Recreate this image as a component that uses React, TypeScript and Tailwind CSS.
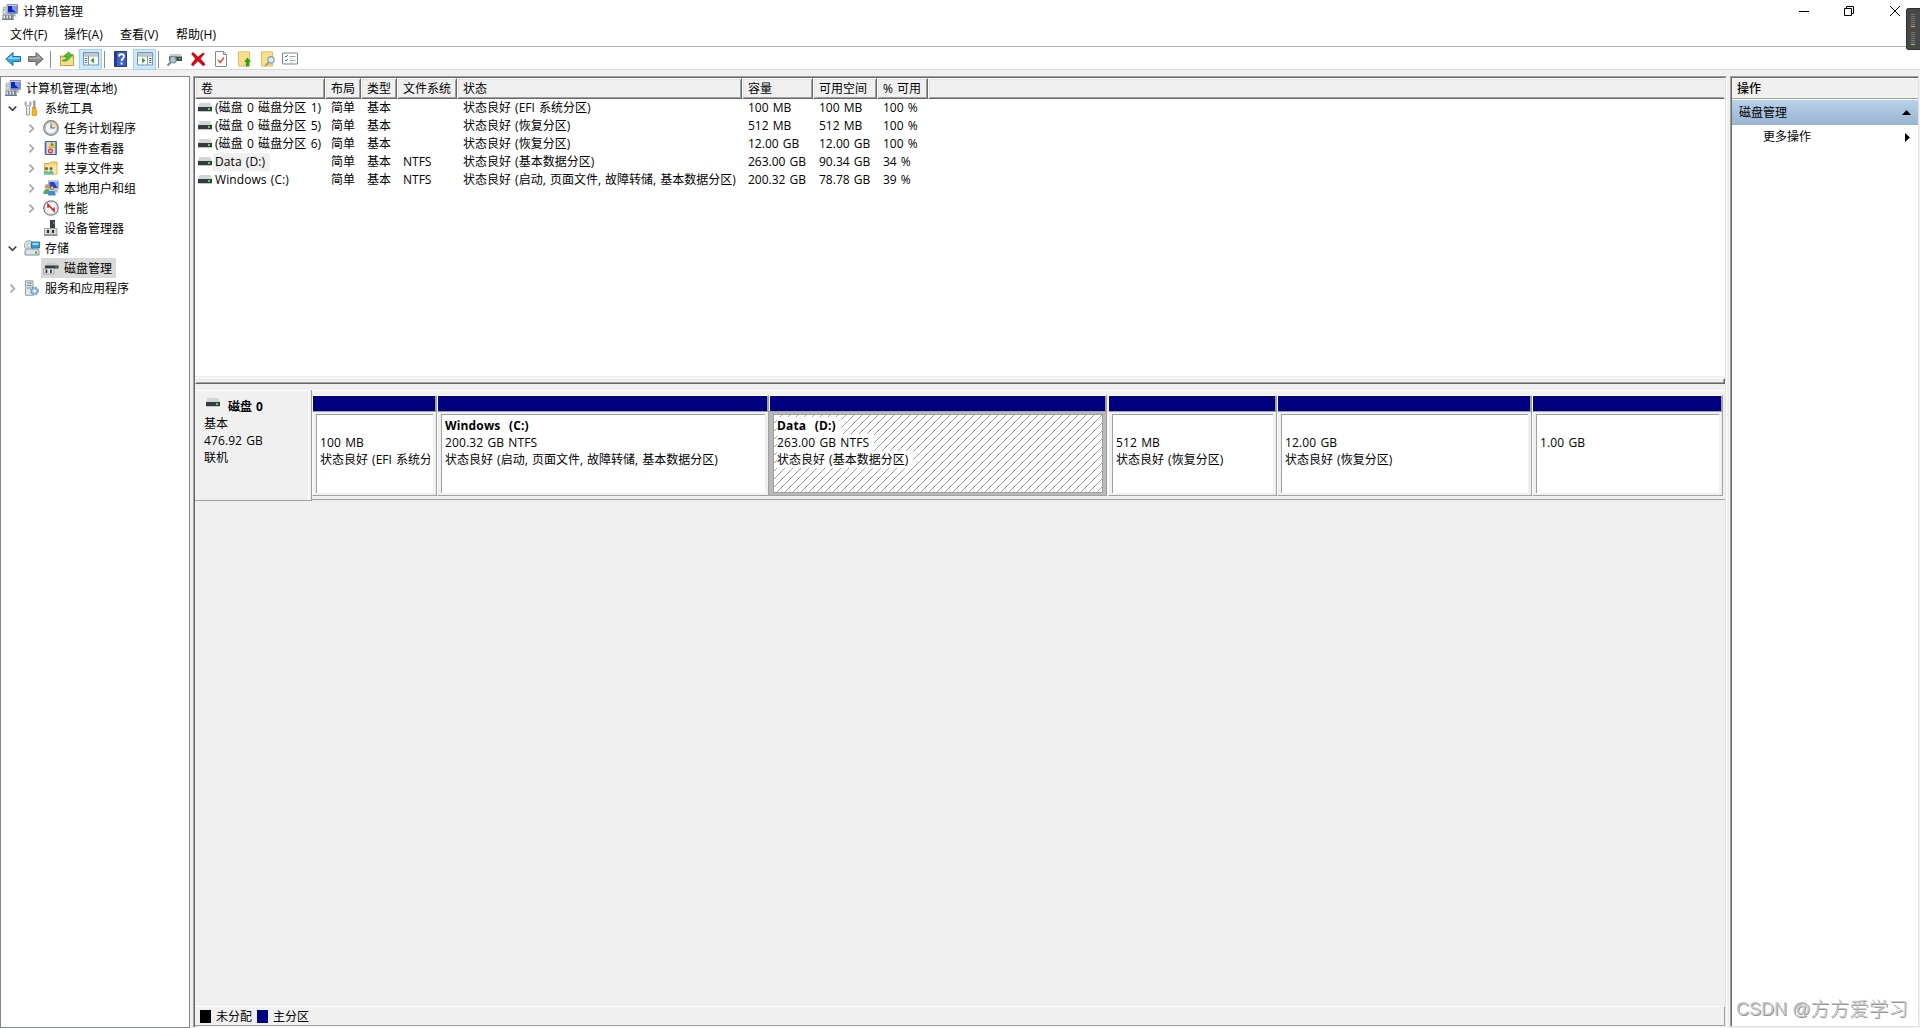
import type { ReactNode } from 'react'
import clsx from 'clsx'

function Svg({ children, w = 16, h = 16 }: { children: ReactNode; w?: number; h?: number }) {
  return (
    <svg className="block shrink-0" width={w} height={h} viewBox={`0 0 ${w} ${h}`} fill="none">
      {children}
    </svg>
  )
}

function ComputerIcon() {
  return (
    <Svg>
      <path d="M5 .5h10.5v9H5z" fill="#c9cdd6" stroke="#8d94a3" />
      <path d="M6 2h8.5v6.5H6z" fill="#1226c4" />
      <path d="M10 2h4.500v6.500L10 5z" fill="#7d9bee" />
      <path d="M8 10h5l2 2.500H8z" fill="#b4b9c2" />
      <path d="M1 3h3v7H1z" fill="#d9dde2" stroke="#9aa1ab" strokeWidth=".6" />
      <path d="M1.500 5h1v1.500h-1z" fill="#2fc12f" />
      <path d="M.5 10.500h11v4.500H.5z" fill="#7b8791" />
      <path d="M1.500 11.500h1.500v3H1.500zM4.500 11.500H6v3H4.500zM7.500 11.500H9v3H7.500z" fill="#dfe5e8" />
      <path d="M0 15h12v.8H0z" fill="#4e575f" />
    </Svg>
  )
}

function ToolsIcon() {
  return (
    <Svg>
      <path d="M2 1.500v3l2 1.500 2-1.500v-3c1.500 1 1.500 4-.5 5.500V15h-3V7C.5 5.500.5 2.500 2 1.500z" fill="#eceff1" stroke="#8b9298" strokeWidth=".9" />
      <path d="M9.500.8h1.600v7H9.500z" fill="#a3a9ae" stroke="#747b80" strokeWidth=".5" />
      <path d="M8.500 7.500H12v2.500l.6 1V15a1.200 1.200 0 0 1-1.200.8H9.100A1.200 1.200 0 0 1 8 15v-4l.5-1z" fill="#f3b51c" stroke="#bf8208" strokeWidth=".6" />
    </Svg>
  )
}

function ClockIcon() {
  return (
    <Svg>
      <circle cx="8" cy="8" r="7.300" fill="#c3c7ca" stroke="#7f858a" strokeWidth="1.200" />
      <circle cx="8" cy="8" r="5.600" fill="#f3f7fb" stroke="#a7adb2" strokeWidth=".5" />
      <path d="M8 8V2.400A5.600 5.600 0 0 1 13.600 8z" fill="#f7dda4" />
      <path d="M8 3.500V8h4" stroke="#5a6472" strokeWidth="1.100" />
    </Svg>
  )
}

function EventIcon() {
  return (
    <Svg>
      <path d="M2.500 1.500h11v13h-11z" fill="#cfdcf0" stroke="#3f6192" />
      <path d="M1 3h3M1 5h3M1 7h3M1 9h3M1 11h3M1 13h3" stroke="#6c7a8e" strokeWidth=".8" />
      <path d="M12 2h1.500v12H12z" fill="#6e92c7" />
      <path d="M9 1.500l3.300 6H5.700z" fill="#ffd42a" stroke="#b98c00" strokeWidth=".5" />
      <path d="M9 3.500v2.500" stroke="#3b2a00" />
      <circle cx="7.500" cy="11" r="2.500" fill="#d9362c" />
      <path d="M6.500 10l2 2m0-2l-2 2" stroke="#fff" strokeWidth=".9" />
    </Svg>
  )
}

function SharedFolderIcon() {
  return (
    <Svg>
      <path d="M1.500 3.500h5.500l1-1.500h6v12H1.500z" fill="#f7d774" stroke="#cf9f33" strokeWidth=".8" />
      <path d="M2 5.500h11.500v8H2z" fill="#fbe69c" />
      <circle cx="3.500" cy="8.500" r="1.500" fill="#7a552e" />
      <circle cx="8" cy="8.500" r="1.500" fill="#55606c" />
      <path d="M.5 14.500c0-3 1.300-4 2.800-4s2.700 1 2.700 4z" fill="#6cc59a" />
      <path d="M5.500 14.500c0-3 1-4 2.500-4s2.500 1 2.500 4z" fill="#57bfa0" />
    </Svg>
  )
}

function UsersIcon() {
  return (
    <Svg>
      <path d="M5.500.8h9.800v8.400H5.500z" fill="#d4d9e4" stroke="#959cae" strokeWidth=".8" />
      <path d="M6.500 2h8v6h-8z" fill="#2240cf" />
      <path d="M11 2h3.500v6z" fill="#8fabef" />
      <path d="M11 10h3l1.500 2.500H11z" fill="#b4b9c2" />
      <circle cx="4" cy="6.500" r="2.300" fill="#c79a57" />
      <circle cx="9" cy="7.500" r="2.300" fill="#77613f" />
      <path d="M.3 14c0-3.500 1.700-5 3.700-5s3.500 1.500 3.500 5z" fill="#56a56b" />
      <path d="M5 15.500c0-3.500 1.700-5 4-5s3.700 1.500 3.700 5z" fill="#4b86c8" />
      <circle cx="9" cy="8" r="1.300" fill="#e7c198" />
    </Svg>
  )
}

function PerfIcon() {
  return (
    <Svg>
      <circle cx="8" cy="8" r="7.200" fill="#fff" stroke="#777c80" strokeWidth="1.300" />
      <circle cx="8" cy="8" r="5.500" stroke="#c2c5c8" strokeWidth=".7" />
      <path d="M5 8V4.500l6 6.500V7.500" stroke="#d5221d" strokeWidth="1.500" />
    </Svg>
  )
}

function DeviceIcon() {
  return (
    <Svg>
      <path d="M7 0h5v8H7z" fill="#3b3f42" />
      <path d="M10 2h1.500v1.500H10z" fill="#40d945" />
      <path d="M1.500 8.500h12.500v6H1.500z" fill="#cfd2d4" stroke="#92979a" strokeWidth=".8" />
      <path d="M4 10h2v3H4zM9 10h2v3H9z" fill="#2b2e30" />
      <path d="M1 14.500h13.500V16H1z" fill="#8b9094" />
    </Svg>
  )
}

function StorageIcon() {
  return (
    <Svg>
      <circle cx="5" cy="5.500" r="4.800" fill="#d7dee2" stroke="#8b959b" strokeWidth=".8" />
      <circle cx="5" cy="5.500" r="1.600" fill="#fff" stroke="#8b959b" strokeWidth=".6" />
      <path d="M7.500 2h8v6h-8z" fill="#2f9fd5" stroke="#1d6c99" strokeWidth=".8" />
      <path d="M8.500 3h6v2h-6z" fill="#9adcf7" />
      <path d="M1 10.500L2.500 9H14l1 1.500v4.500H1z" fill="#dfe2e4" stroke="#7d8387" strokeWidth=".9" />
      <path d="M11 11.500h2v2h-2z" fill="#27b32c" />
    </Svg>
  )
}

function DiskMgmtIcon() {
  return (
    <Svg>
      <path d="M4 3h10l1.500 2.500H2z" fill="#c9ccce" />
      <path d="M2 5.500h13.500v3H2z" fill="#35383a" />
      <path d="M12.500 6.500H14v1h-1.500z" fill="#40d945" />
      <path d="M.5 8.500h10.500v5.500H.5z" fill="#e3e5e6" stroke="#8c9194" strokeWidth=".7" />
      <path d="M2.500 9.500h1.800v3.500H2.500zM7 9.500h1.800v3.500H7z" fill="#35383a" />
    </Svg>
  )
}

function ServicesIcon() {
  return (
    <Svg>
      <path d="M1.500.8h7.500v14.500H1.500z" fill="#dfe4e7" stroke="#8a949b" strokeWidth=".9" />
      <path d="M3 3h4.500M3 5.500h4.500M3 8h4.500" stroke="#7c878e" />
      <path d="M6 2.500h1.500v1H6z" fill="#2fb934" />
      <circle cx="10.500" cy="11" r="3.600" fill="#c3dcf2" stroke="#6d9cc6" strokeWidth="1.800" strokeDasharray="1.600 1.228" />
      <circle cx="10.500" cy="11" r="3" fill="#a9cbe9" stroke="#5f8fba" strokeWidth=".7" />
      <circle cx="10.500" cy="11" r="1.200" fill="#fff" />
    </Svg>
  )
}

function DriveIcon() {
  return (
    <Svg w={14} h={9}>
      <path d="M1.500 0h11L14 4H0z" fill="#d3d5da" />
      <path d="M0 4h14v4H0z" fill="#383b3d" />
      <path d="M0 8h14v1H0z" fill="#c3c6c9" />
      <path d="M10 5h2v2h-2z" fill="#3fe43f" />
    </Svg>
  )
}

function ArrowIcon({ back = false }: { back?: boolean }) {
  return back ? (
    <Svg>
      <path d="M.8 8L8 1.500v4h7.500v5H8v4z" fill="#3ea8e6" stroke="#1c6fae" />
      <path d="M2.500 8L7 4v2.500h7.500V8z" fill="#8ed6fb" />
    </Svg>
  ) : (
    <Svg>
      <path d="M15.200 8L8 1.500v4H.5v5H8v4z" fill="#8b8b8b" stroke="#6a6a6a" />
      <path d="M13.500 8L9 4v2.500H1.500V8z" fill="#adadad" />
    </Svg>
  )
}

function FolderOpenUpIcon() {
  return (
    <Svg>
      <path d="M.5 5h4l1-1.500h8v11H.5z" fill="#e8c15a" stroke="#bb8f2c" strokeWidth=".8" />
      <path d="M1 7h12v7H1z" fill="#f7dd8c" />
      <path d="M2 9.500c3.500-.5 4.500-2 4.500-4H4L8.500.8l4 4.200H10c0 4-4 6.500-8 4.500z" fill="#46c23b" stroke="#258c1f" strokeWidth=".6" />
    </Svg>
  )
}

function PaneIcon({ flipped = false }: { flipped?: boolean }) {
  return (
    <Svg>
      <path d="M.5 1.500h15v12.500H.5z" fill="#fdfdfd" stroke="#8193a2" />
      <path d="M1 2h14v2.500H1z" fill="#bfc9d1" />
      <path d="M1 5h14" stroke="#8193a2" strokeWidth=".8" />
      {flipped ? (
        <>
          <path d="M10.500 5v9" stroke="#8193a2" />
          <path d="M12 7.500h2.500M12 9.500h2.500M12 11.500h2.500" stroke="#3b76aa" />
          <path d="M5 6.500v6L8.500 9.500z" fill="#35ad2c" />
        </>
      ) : (
        <>
          <path d="M5.500 5v9" stroke="#8193a2" />
          <path d="M1.800 7.500h2.500M1.800 9.500h2.500M1.800 11.500h2.500" stroke="#3b76aa" />
          <path d="M11 6.500v6L7.500 9.500z" fill="#35ad2c" />
        </>
      )}
    </Svg>
  )
}

function HelpIcon() {
  return (
    <Svg>
      <path d="M1.500.5h12v15h-12z" fill="#3d61c4" stroke="#23397f" />
      <path d="M1.500 1h2.500v14H1.500z" fill="#223d91" />
      <path d="M6 5.500c0-3 5-3 5 0 0 2-2.500 2-2.500 4.500" stroke="#fff" strokeWidth="1.800" />
      <path d="M7.500 11.500h2v2h-2z" fill="#fff" />
    </Svg>
  )
}

function DriveSearchIcon() {
  return (
    <Svg>
      <path d="M3.500 3h10l1.500 2.500H2z" fill="#c6cacd" />
      <path d="M2 5.500h13V10H2z" fill="#46494b" />
      <path d="M12 7h1.500v1.500H12z" fill="#3fe43f" />
      <path d="M4 11L.5 14.500" stroke="#6f7c86" strokeWidth="1.800" />
      <circle cx="6" cy="8.700" r="3.200" fill="#a9c6da" stroke="#75828b" strokeWidth="1.100" />
    </Svg>
  )
}

function DeleteIcon() {
  return (
    <Svg>
      <path d="M3 1l5 4.700L13.200 1.500l1.500 1.300-4.200 5 5 5.500-2.200 2L8 10.300 3 15.200 1 13.300l4.300-5.500L1.200 3z" fill="#d8040b" />
    </Svg>
  )
}

function DocCheckIcon() {
  return (
    <Svg>
      <path d="M2.500.5h8l3 3v12h-11z" fill="#fff" stroke="#8a8a8a" />
      <path d="M10.500.5v3h3" stroke="#8a8a8a" />
      <path d="M5 9l2.200 2.500L11 6.500" stroke="#e0542a" strokeWidth="1.500" />
    </Svg>
  )
}

function FolderPageIcon({ search = false }: { search?: boolean }) {
  return (
    <Svg>
      <path d="M1.500.8h11v14.200h-11z" fill="#fbe08a" stroke="#dcb24a" strokeWidth=".8" />
      <path d="M12.300 10v4.600H5z" fill="#f3cb60" />
      {search ? (
        <>
          <path d="M9.500 10.500L5 15" stroke="#8b9ba7" strokeWidth="1.700" />
          <circle cx="11" cy="8.800" r="3.200" fill="#d6ecf9" stroke="#7f9bad" strokeWidth="1.100" />
        </>
      ) : (
        <path d="M10.500 6.500L14 11h-2v4.500H9V11H7z" fill="#27a31f" />
      )}
    </Svg>
  )
}

function ListIcon() {
  return (
    <Svg>
      <path d="M.5 2h15v11H.5z" fill="#fff" stroke="#7d8791" />
      <path d="M3 5l1 1 2-2M3 9l1 1 2-2" stroke="#2d7fc1" />
      <path d="M7.500 5.500h6M7.500 9.500h6" stroke="#a0a7ad" />
      <path d="M7.500 7.500h4M7.500 11.500h4" stroke="#d0d4d8" strokeWidth=".7" />
    </Svg>
  )
}

const menus = [
  { label: '文件(F)', cls: 'w-[54px]' },
  { label: '操作(A)', cls: 'w-[56px]' },
  { label: '查看(V)', cls: 'w-[56px]' },
  { label: '帮助(H)', cls: 'w-[56px]' },
]

const tree: { label: string; level: 0 | 1 | 2; state?: 'open' | 'closed'; icon: ReactNode; selected?: boolean }[] = [
  { label: '计算机管理(本地)', level: 0, icon: <ComputerIcon /> },
  { label: '系统工具', level: 1, state: 'open', icon: <ToolsIcon /> },
  { label: '任务计划程序', level: 2, state: 'closed', icon: <ClockIcon /> },
  { label: '事件查看器', level: 2, state: 'closed', icon: <EventIcon /> },
  { label: '共享文件夹', level: 2, state: 'closed', icon: <SharedFolderIcon /> },
  { label: '本地用户和组', level: 2, state: 'closed', icon: <UsersIcon /> },
  { label: '性能', level: 2, state: 'closed', icon: <PerfIcon /> },
  { label: '设备管理器', level: 2, icon: <DeviceIcon /> },
  { label: '存储', level: 1, state: 'open', icon: <StorageIcon /> },
  { label: '磁盘管理', level: 2, icon: <DiskMgmtIcon />, selected: true },
  { label: '服务和应用程序', level: 1, state: 'closed', icon: <ServicesIcon /> },
]

const columns = [
  { title: '卷', cls: 'w-[130px]' },
  { title: '布局', cls: 'w-[36px]' },
  { title: '类型', cls: 'w-[36px]' },
  { title: '文件系统', cls: 'w-[60px]' },
  { title: '状态', cls: 'w-[285px]' },
  { title: '容量', cls: 'w-[71px]' },
  { title: '可用空间', cls: 'w-[64px]' },
  { title: '% 可用', cls: 'w-[51px]' },
]

const volumes = [
  ['(磁盘 0 磁盘分区 1)', '简单', '基本', '', '状态良好 (EFI 系统分区)', '100 MB', '100 MB', '100 %'],
  ['(磁盘 0 磁盘分区 5)', '简单', '基本', '', '状态良好 (恢复分区)', '512 MB', '512 MB', '100 %'],
  ['(磁盘 0 磁盘分区 6)', '简单', '基本', '', '状态良好 (恢复分区)', '12.00 GB', '12.00 GB', '100 %'],
  ['Data (D:)', '简单', '基本', 'NTFS', '状态良好 (基本数据分区)', '263.00 GB', '90.34 GB', '34 %'],
  ['Windows (C:)', '简单', '基本', 'NTFS', '状态良好 (启动, 页面文件, 故障转储, 基本数据分区)', '200.32 GB', '78.78 GB', '39 %'],
]

const partitions = [
  { name: '', size: '100 MB', status: '状态良好 (EFI 系统分区)', cls: 'w-[125px]' },
  { name: 'Windows  (C:)', size: '200.32 GB NTFS', status: '状态良好 (启动, 页面文件, 故障转储, 基本数据分区)', cls: 'w-[332px]' },
  { name: 'Data  (D:)', size: '263.00 GB NTFS', status: '状态良好 (基本数据分区)', cls: 'w-[338px] mr-px', selected: true },
  { name: '', size: '512 MB', status: '状态良好 (恢复分区)', cls: 'w-[169px]' },
  { name: '', size: '12.00 GB', status: '状态良好 (恢复分区)', cls: 'w-[255px]' },
  { name: '', size: '1.00 GB', status: '', cls: 'w-[191px]' },
]

function TitleBar() {
  return (
    <div className="flex h-[23px] items-center bg-white pl-[2px]">
      <ComputerIcon />
      <span className="ml-[5px]">计算机管理</span>
      <svg className="ml-auto mr-[19px] -mt-[2px]" width="102" height="12" viewBox="0 0 102 12" fill="none" stroke="#000">
        <path d="M0 6.500h10" />
        <path d="M45.500 3.500h7v7h-7zM47.500 3.500v-2h7v7h-2" />
        <path d="M91 1l10 10M101 1L91 11" />
      </svg>
    </div>
  )
}

function Separator({ className }: { className: string }) {
  return <div className={clsx('h-[17px] w-px bg-[#8d8d8d]', className)} />
}

function Toggled({ children, className }: { children: ReactNode; className: string }) {
  return (
    <div className={clsx('flex h-[21px] w-[23px] items-center justify-center border border-[#99d1ff] bg-[#cce8ff]', className)}>
      {children}
    </div>
  )
}

function Toolbar() {
  return (
    <div className="flex h-[23px] items-center border-b border-[#dadada] bg-white pl-[5px] pt-[2px]">
      <ArrowIcon back />
      <div className="ml-[7px]"><ArrowIcon /></div>
      <Separator className="ml-[6px]" />
      <div className="ml-[9px]"><FolderOpenUpIcon /></div>
      <Toggled className="ml-[3px]"><PaneIcon /></Toggled>
      <Separator className="ml-[2px]" />
      <div className="ml-[8px]"><HelpIcon /></div>
      <Toggled className="ml-[4px]"><PaneIcon flipped /></Toggled>
      <Separator className="ml-[2px]" />
      <div className="ml-[8px]"><DriveSearchIcon /></div>
      <div className="ml-[7px]"><DeleteIcon /></div>
      <div className="ml-[7px]"><DocCheckIcon /></div>
      <div className="ml-[8px]"><FolderPageIcon /></div>
      <div className="ml-[7px]"><FolderPageIcon search /></div>
      <div className="ml-[6px]"><ListIcon /></div>
    </div>
  )
}

function Chevron({ state }: { state?: 'open' | 'closed' }) {
  return (
    <svg className="block shrink-0" width="9" height="9" viewBox="0 0 9 9" fill="none" strokeWidth="1.700">
      {state === 'open' && <path d="M.7 2.500l3.800 3.800 3.800-3.800" stroke="#404040" />}
      {state === 'closed' && <path d="M2.500.7l3.800 3.800-3.800 3.800" stroke="#a6a6a6" />}
    </svg>
  )
}

function TreePane() {
  return (
    <div className="w-[190px] border border-[#828790] bg-white pt-px">
      {tree.map((item) => (
        <div
          key={item.label}
          className={clsx('flex h-5 items-center', {
            'pl-[4px]': item.level === 0,
            'pl-[7px]': item.level === 1,
            'pl-[26px]': item.level === 2,
          })}
        >
          {item.level > 0 && <Chevron state={item.state} />}
          <div className={clsx('flex h-5 items-center', item.level === 1 && 'ml-[7px]', item.level === 2 && 'ml-[5px] pl-[2px]', item.selected && 'bg-[#d9d9d9] pr-[4px]')}>
            {item.icon}
            <span className="ml-[5px] pt-px">{item.label}</span>
          </div>
        </div>
      ))}
    </div>
  )
}

function VolumeList() {
  return (
    <div className="h-[298px] bg-white">
      <div className="flex h-[21px] bg-[#f0f0f0]">
        {columns.map((col) => (
          <div key={col.title} className={clsx('shrink-0 border border-b-[#696969] border-l-white border-r-[#696969] border-t-white', col.cls)}>
            <div className="flex h-full items-center whitespace-nowrap border border-b-[#a0a0a0] border-l-[#e3e3e3] border-r-[#a0a0a0] border-t-[#e3e3e3] pl-[4px]">
              {col.title}
            </div>
          </div>
        ))}
        <div className="flex-1 border border-b-[#696969] border-l-white border-r-[#f0f0f0] border-t-white">
          <div className="h-full border border-b-[#a0a0a0] border-l-[#e3e3e3] border-r-[#f0f0f0] border-t-[#e3e3e3]" />
        </div>
      </div>
      {volumes.map((row) => (
        <div key={row[0]} className="flex h-[18px]">
          {row.map((cell, i) => (
            <div key={columns[i].title} className={clsx('flex shrink-0 items-center whitespace-nowrap', columns[i].cls, i === 0 ? 'pl-[3px]' : 'pl-[6px]')}>
              {i === 0 && <div className="pb-[2px]"><DriveIcon /></div>}
              {i === 0 ? (
                <span className={clsx('ml-px flex h-[18px] items-center pl-[2px] tracking-[0.08px]', cell.startsWith('Data') && 'bg-[#f0f0f0] pr-[5px]')}>{cell}</span>
              ) : (
                cell
              )}
            </div>
          ))}
        </div>
      ))}
    </div>
  )
}

function Hatch() {
  return (
    <svg className="absolute inset-0 h-full w-full" shapeRendering="crispEdges">
      <defs>
        <pattern id="hatch" width="8" height="8" patternUnits="userSpaceOnUse">
          <path d="M0 7h1v1H0zM1 6h1v1H1zM2 5h1v1H2zM3 4h1v1H3zM4 3h1v1H4zM5 2h1v1H5zM6 1h1v1H6zM7 0h1v1H7z" fill="#a0a0a0" />
        </pattern>
      </defs>
      <rect width="100%" height="100%" fill="url(#hatch)" />
    </svg>
  )
}

function Partition({ part }: { part: (typeof partitions)[number] }) {
  const lines = [
    { text: part.name, cls: 'font-bold tracking-[0.15px]' },
    { text: part.size, cls: 'tracking-[0.12px]' },
    { text: part.status, cls: '' },
  ]

  return (
    <div className={clsx('flex shrink-0 flex-col', part.cls)}>
      <div className="h-[16px] border-l border-r-2 border-t border-l-white border-r-[#a0a0a0] border-t-white bg-[#000080]" />
      <div
        className={clsx(
          'h-[85px] border-y border-r border-y-[#a0a0a0] border-r-[#a0a0a0] py-[2px] pr-[3px]',
          part.selected ? 'bg-[#b9b9b9] pl-[4px]' : 'border-l border-l-white bg-[#f0f0f0] pl-[3px]',
        )}
      >
        <div
          className={clsx(
            'relative h-[79px] overflow-hidden border-[#a0a0a0] bg-white pt-[2px] leading-[17px]',
            part.selected ? 'border pl-[3px]' : 'border-l border-t pl-[3px] pr-[3px]',
          )}
        >
          {part.selected && <Hatch />}
          {lines.map((line, i) => (
            <div key={i} className={clsx('relative h-[17px] overflow-hidden whitespace-pre', line.cls, part.selected && 'w-fit bg-white pr-[5px]')}>
              {line.text}
            </div>
          ))}
        </div>
      </div>
    </div>
  )
}

function DiskView() {
  return (
    <div className="flex h-[116px] pt-[6px]">
      <div className="flex h-[111px] w-[117px] flex-col border-b border-r border-b-[#a0a0a0] border-r-[#a0a0a0]">
        <div className="mr-[2px] h-full border-r border-t border-white pl-[9px] pt-[7px] leading-[17px]">
          <div className="flex h-[17px] pl-[2px] font-bold">
            <DriveIcon />
            <span className="ml-[8px]">磁盘 0</span>
          </div>
          <div>基本</div>
          <div className="tracking-[0.1px]">476.92 GB</div>
          <div>联机</div>
        </div>
      </div>
      <div className="flex h-[110px] flex-1 border-b border-t border-b-[#a0a0a0] border-t-white pt-[4px]">
        {partitions.map((part, i) => (
          <Partition key={i} part={part} />
        ))}
      </div>
    </div>
  )
}

function Legend() {
  return (
    <div className="flex h-[20px] items-center border-b border-r border-t border-b-[#a0a0a0] border-r-[#a0a0a0] border-t-white pl-[5px]">
      <div className="h-[13px] w-[11px] bg-black" />
      <span className="ml-[5px] pt-[2px]">未分配</span>
      <div className="ml-[5px] h-[13px] w-[11px] bg-[#000080]" />
      <span className="ml-[5px] pt-[2px]">主分区</span>
    </div>
  )
}

function MainPane() {
  return (
    <div className="ml-[3px] flex h-[952px] w-[1534px] flex-col border border-b-white border-l-[#a0a0a0] border-r-white border-t-[#a0a0a0]">
      <div className="flex flex-1 flex-col border border-b-0 border-l-[#696969] border-r-[#e3e3e3] border-t-[#696969]">
        <VolumeList />
        <div className="mt-[2px] h-[6px] border border-b-[#696969] border-l-white border-r-[#696969] border-t-white">
          <div className="h-full border border-b-[#a0a0a0] border-l-[#e3e3e3] border-r-[#a0a0a0] border-t-[#e3e3e3]" />
        </div>
        <DiskView />
        <div className="flex-1" />
        <Legend />
        <div className="h-px" />
      </div>
    </div>
  )
}

function ActionsPane() {
  return (
    <div className="ml-[3px] flex h-[951px] w-[189px] flex-col border border-b-[#e3e3e3] border-l-[#a0a0a0] border-r-[#e3e3e3] border-t-[#a0a0a0]">
      <div className="flex flex-1 flex-col border-l border-t border-[#696969] bg-white">
        <div className="flex h-[21px] items-center border-b border-t border-b-[#a0a0a0] border-t-white bg-[#f0f0f0] pl-[5px] font-medium">操作</div>
        <div className="mt-px flex h-[25px] items-center justify-between bg-gradient-to-b from-[#b9d1ea] to-[#99b4d1] pl-[7px] pr-[7px]">
          <span>磁盘管理</span>
          <svg width="9" height="5" viewBox="0 0 9 5"><path d="M4.500 0L9 5H0z" fill="#000" /></svg>
        </div>
        <div className="flex h-[24px] items-center justify-between pl-[31px] pr-[8px]">
          <span>更多操作</span>
          <svg width="5" height="9" viewBox="0 0 5 9"><path d="M0 0l5 4.500L0 9z" fill="#000" /></svg>
        </div>
        <div className="mb-[3px] mt-auto flex h-[28px] items-center whitespace-nowrap pl-[4px] font-['Liberation_Sans','Noto_Sans_CJK_SC',sans-serif] text-[19.500px] font-light text-[#c8c8c8] [text-shadow:1px_1px_0_#959595] [word-spacing:0]">
          <span className="text-[18px]">CSDN @</span>
          <span>方方爱学习</span>
        </div>
      </div>
    </div>
  )
}

function Meter({ on }: { on: string }) {
  return (
    <div className="flex flex-col gap-px">
      {[0, 1, 2, 3, 4, 5].map((n) => (
        <div key={n} className="h-px w-[4px] bg-[#777]" />
      ))}
      <div className={clsx('h-px w-[4px]', on)} />
    </div>
  )
}

export default function App() {
  return (
    <div className="relative flex h-[1028px] w-[1920px] flex-col overflow-hidden bg-[#f0f0f0] font-['Open_Sans','Noto_Sans_CJK_SC',sans-serif] text-[12px] leading-[16px] text-black [word-spacing:1px]">
      <TitleBar />
      <div className="flex h-[24px] items-center border-b border-[#b4b4b4] bg-white pl-[10px]">
        {menus.map((m) => (
          <span key={m.label} className={m.cls}>{m.label}</span>
        ))}
      </div>
      <Toolbar />
      <div className="flex h-[958px] pt-[6px]">
        <TreePane />
        <MainPane />
        <ActionsPane />
      </div>
      <div className="absolute right-0 top-[8px] flex h-[42px] w-[14px] flex-col gap-[5px] rounded-l-[3px] border border-r-0 border-[#2e2e2e] bg-[#484848] pl-[4px] pt-[5px]">
        <Meter on="bg-[#f5a33a]" />
        <Meter on="bg-[#8be82c]" />
      </div>
    </div>
  )
}
